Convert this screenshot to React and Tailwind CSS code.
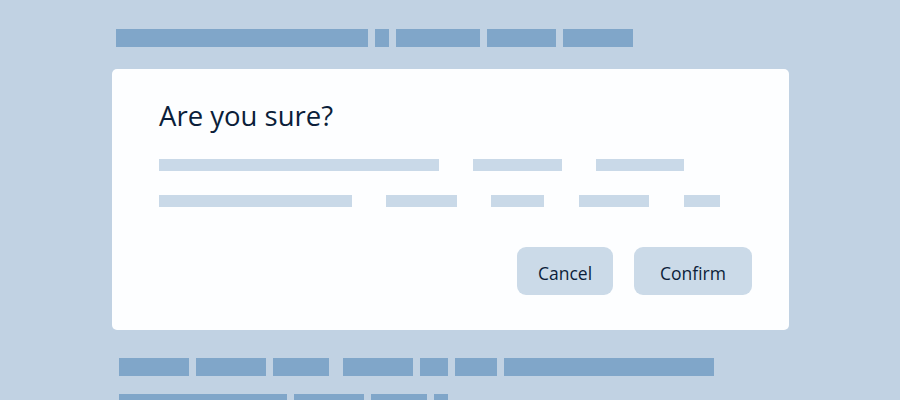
export default function App() {
  const bar = "h-[18px] bg-[#80a6c9] shrink-0";
  const line = "h-[12px] bg-[#c9d9e8] shrink-0";
  return (
    <div className="w-[900px] h-[400px] overflow-hidden bg-[#c1d2e3] relative" style={{ fontFamily: '"Open Sans", "Noto Sans", sans-serif' }}>
      <div className="flex gap-[7px] pl-[116px] pt-[29px]">
        <div className={`${bar} w-[252px]`} />
        <div className={`${bar} w-[14px]`} />
        <div className={`${bar} w-[84px]`} />
        <div className={`${bar} w-[69px]`} />
        <div className={`${bar} w-[70px]`} />
      </div>
      <div className="ml-[112px] mt-[22px] w-[677px] h-[261px] bg-[#fdfeff] rounded-[5px] flex flex-col pl-[47px] pr-[37px] pt-[33px]">
        <div className="text-[27.5px] leading-[28px] text-[#0b1e3a]">Are you sure?</div>
        <div className="flex mt-[29px]">
          <div className={`${line} w-[280px]`} />
          <div className={`${line} w-[89px] ml-[34px]`} />
          <div className={`${line} w-[88px] ml-[34px]`} />
        </div>
        <div className="flex mt-[24px]">
          <div className={`${line} w-[193px]`} />
          <div className={`${line} w-[71px] ml-[34px]`} />
          <div className={`${line} w-[53px] ml-[34px]`} />
          <div className={`${line} w-[70px] ml-[35px]`} />
          <div className={`${line} w-[36px] ml-[35px]`} />
        </div>
        <div className="flex justify-end gap-[21px] mt-[40px]">
          <div className="w-[96px] h-[48px] rounded-[9px] bg-[#cbdae8] flex items-center justify-center pt-[5px] text-[17.5px] text-[#0b1e3a]">Cancel</div>
          <div className="w-[118px] h-[48px] rounded-[9px] bg-[#cbdae8] flex items-center justify-center pt-[5px] text-[17.5px] text-[#0b1e3a]">Confirm</div>
        </div>
      </div>
      <div className="flex gap-[7px] pl-[119px] mt-[28px]">
        <div className={`${bar} w-[70px]`} />
        <div className={`${bar} w-[70px]`} />
        <div className={`${bar} w-[56px]`} />
        <div className={`${bar} w-[70px] ml-[7px]`} />
        <div className={`${bar} w-[28px]`} />
        <div className={`${bar} w-[42px]`} />
        <div className={`${bar} w-[210px]`} />
      </div>
      <div className="flex gap-[7px] pl-[119px] mt-[18px]">
        <div className={`${bar} w-[168px]`} />
        <div className={`${bar} w-[70px]`} />
        <div className={`${bar} w-[56px]`} />
        <div className={`${bar} w-[14px]`} />
      </div>
    </div>
  );
}
